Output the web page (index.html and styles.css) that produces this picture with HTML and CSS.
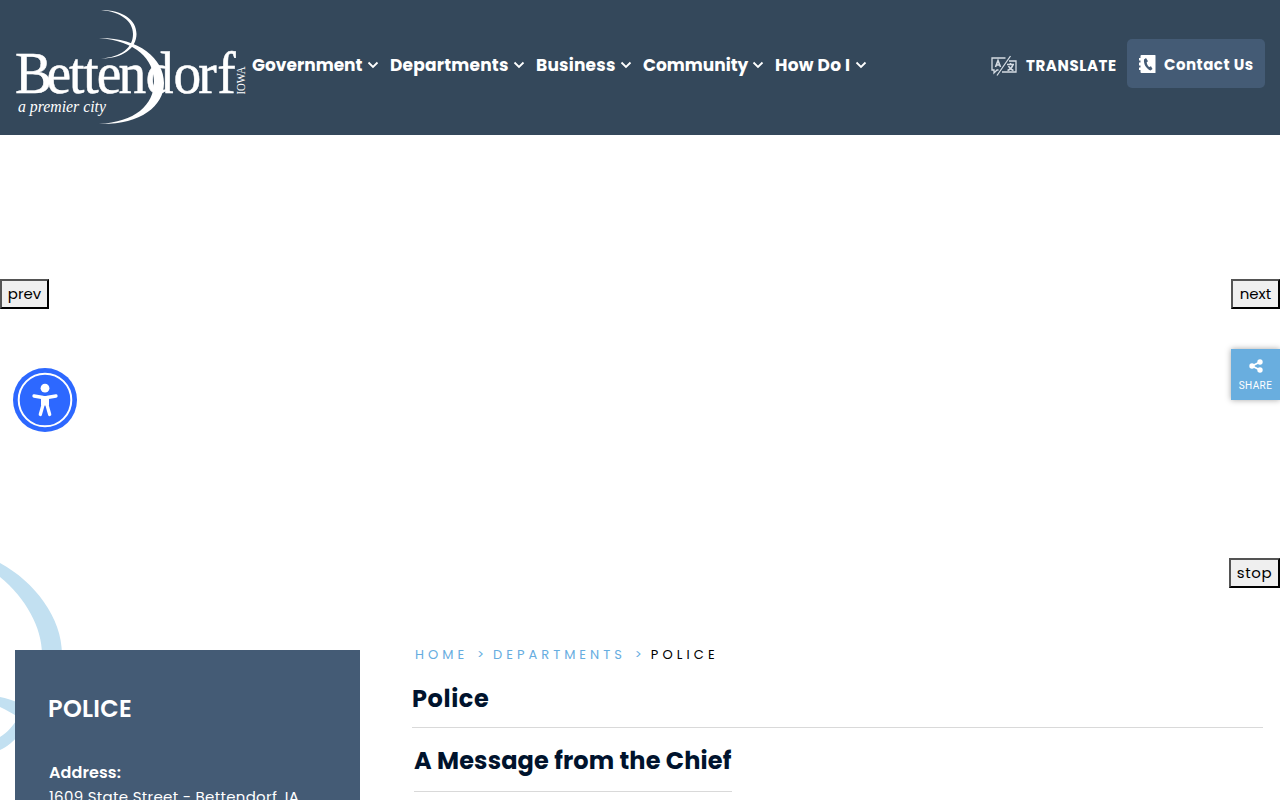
FILE: index.html
```html
<!DOCTYPE html>
<html lang="en">
<head>
    <meta charset="UTF-8">
    <meta name="viewport" content="width=device-width, initial-scale=1.0">
    <title>Police | Bettendorf, IA</title>
    <link rel="stylesheet" href="styles.css">
</head>
<body>
    <header class="header">
        <a class="logo" href="#">
            <svg width="252" height="135" viewBox="0 0 252 135" fill="#fff">
                <path d="M101 10C123 10 136.500 20 136.500 34C136.500 48 123 58.500 101 58.500C121 57 133 48 133 34C133 21 121 12 101 10Z"/>
                <path d="M99 38C138 37.500 164 58 164 83C164 107 139 125 99 124C135 122 154 105 154 82C154 59 136 41 99 38Z"/>
                <text class="logo-name" transform="scale(0.94 1)" x="16 49.500 73.500 88.500 103 126 155 184.500 211 231" y="93">Bettendorf</text>
                <text class="logo-tag" x="18" y="112" textLength="88" lengthAdjust="spacingAndGlyphs">a premier city</text>
                <text class="logo-state" transform="translate(245 94.500) rotate(-90)" textLength="28" lengthAdjust="spacingAndGlyphs">IOWA</text>
            </svg>
        </a>
        <nav class="nav">
            <a class="nav-item government" href="#"><span>Government</span><svg class="chevron" viewBox="0 0 12 8"><path d="M1.500 1.500L6 6L10.500 1.500"/></svg></a>
            <a class="nav-item departments" href="#"><span>Departments</span><svg class="chevron" viewBox="0 0 12 8"><path d="M1.500 1.500L6 6L10.500 1.500"/></svg></a>
            <a class="nav-item business" href="#"><span>Business</span><svg class="chevron" viewBox="0 0 12 8"><path d="M1.500 1.500L6 6L10.500 1.500"/></svg></a>
            <a class="nav-item community" href="#"><span>Community</span><svg class="chevron" viewBox="0 0 12 8"><path d="M1.500 1.500L6 6L10.500 1.500"/></svg></a>
            <a class="nav-item how" href="#"><span>How Do I</span><svg class="chevron" viewBox="0 0 12 8"><path d="M1.500 1.500L6 6L10.500 1.500"/></svg></a>
        </nav>
        <div class="tools">
            <a class="translate" href="#">
                <svg width="26" height="22" viewBox="0 0 26 22" fill="none" stroke="#d5dce3" stroke-width="1.300">
                    <path d="M14.500 3H1V15H3V18L6 15H7.500M19.500 1L6 20.500M18 6H25V17H11"/>
                    <path stroke-width="1.600" d="M4.500 12L7 5.500L9.500 12M5 10H9M16 9.500H23M19.500 8V9.500M22 9.500C21 13 19 14.500 16.500 15.500M17.500 11C19 14 20.500 15 22.500 15.500"/>
                </svg>
                <span>TRANSLATE</span>
            </a>
            <a class="contact" href="#">
                <svg width="17" height="18" viewBox="0 0 17 18">
                    <path fill="#fff" d="M2.500 0H16Q16.500 0 16.500 .5V17.500Q16.500 18 16 18H2.500Q1.500 18 1.500 17V15H0V12.500H1.500V10.500H0V7.500H1.500V5.500H0V3H1.500V1Q1.500 0 2.500 0Z"/>
                    <path fill="#445b75" d="M7 3L5 4.500C4.500 9 7 13.500 11.500 15.500L13.500 14L12 11.200L10.300 12C8.800 11 7.900 9.300 7.700 7.200L9 6.200Z"/>
                </svg>
                <span>Contact Us</span>
            </a>
        </div>
    </header>

    <section class="banner">
        <button class="slide-btn prev">prev</button>
        <button class="slide-btn next">next</button>
        <button class="slide-btn stop">stop</button>
    </section>

    <svg class="swirl" width="70" height="200" viewBox="0 0 70 200" fill="#c2e0f1">
        <path d="M0 13C35 32 62 68 62 104V120H42V104C42 78 26 48 0 27Z"/>
        <path d="M0 147C6 148 13 150 20 154V168C13 164 7 160 0 157Z"/>
        <path d="M20 165V184C14 191 7 197 0 200V187C7 183 14 175 20 165Z"/>
    </svg>

    <main class="content">
        <aside class="sidebar">
            <h2>POLICE</h2>
            <strong>Address:</strong>
            <p>1609 State Street - Bettendorf, IA</p>
        </aside>
        <article class="page">
            <div class="breadcrumb">
                <a class="crumb-home" href="#">HOME</a>
                <i>&gt;</i>
                <a class="crumb-dept" href="#">DEPARTMENTS</a>
                <i>&gt;</i>
                <span>POLICE</span>
            </div>
            <h1>Police</h1>
            <h2 class="message">A Message from the Chief</h2>
        </article>
    </main>

    <button class="accessibility" aria-label="Accessibility">
        <svg width="64" height="64" viewBox="0 0 64 64">
            <circle cx="32" cy="32" r="32" fill="#2d68ff"/>
            <circle cx="32" cy="32" r="26.300" fill="none" stroke="#fff" stroke-width="2"/>
            <circle cx="32" cy="20.200" r="4.400" fill="#fff"/>
            <path d="M21 28L30 29.500V37L27.300 46.500M43 28L34 29.500V37L36.700 46.500" fill="none" stroke="#fff" stroke-width="3.300" stroke-linecap="round" stroke-linejoin="round"/>
            <path d="M28 28H36V37.500H28Z" fill="#fff"/>
        </svg>
    </button>

    <a class="share" href="#">
        <svg width="14" height="14" viewBox="0 0 14 14" fill="#fff">
            <path d="M11 3L3 7L11 11" fill="none" stroke="#fff" stroke-width="1.800"/>
            <circle cx="11" cy="3" r="2.700"/><circle cx="3" cy="7" r="2.700"/><circle cx="11" cy="11" r="2.700"/>
        </svg>
        <span>SHARE</span>
    </a>
</body>
</html>
```
FILE: styles.css
```css
* {
    box-sizing: border-box;
}

body {
    margin: 0;
    height: 800px;
    overflow: hidden;
    position: relative;
    background: #fff;
    color: #000;
    font-family: Poppins, Inter, sans-serif;
}

a {
    color: inherit;
    text-decoration: none;
}

.header {
    display: flex;
    height: 135px;
    background: #34485b;
    color: #fff;
}

.logo svg {
    display: block;
}

.logo-name {
    font: 59px "Liberation Serif", serif;
    stroke: #fff;
    stroke-width: 0.5px;
}

.logo-tag {
    font: italic 17px "Liberation Serif", serif;
}

.logo-state {
    font: 13px "Liberation Serif", serif;
}

.nav {
    display: flex;
    gap: 11px;
    padding-top: 52px;
}

.nav-item {
    display: flex;
    justify-content: space-between;
    height: 26px;
    line-height: 26px;
    font-size: 17px;
    font-weight: 700;
    white-space: nowrap;
}

.government { width: 127px; }
.departments { width: 135px; letter-spacing: 0.2px; }
.business { width: 96px; letter-spacing: 0.2px; }
.community { width: 121px; }
.how { width: 92px; letter-spacing: 0.25px; }

.chevron {
    flex: none;
    width: 12px;
    height: 8px;
    margin-top: 9px;
    fill: none;
    stroke: #fff;
    stroke-width: 1.8;
}

.tools {
    display: flex;
    align-items: flex-start;
    margin-left: auto;
    padding: 39px 15px 0 0;
}

.translate {
    display: flex;
    align-items: center;
    gap: 9px;
    width: 136px;
    height: 53px;
    font-size: 15px;
    font-weight: 700;
    letter-spacing: 0.6px;
}

.contact {
    display: flex;
    align-items: center;
    gap: 8px;
    width: 138px;
    height: 49px;
    padding: 1px 0 0 12px;
    border-radius: 5px;
    background: #445b75;
    font-size: 15px;
    font-weight: 700;
    letter-spacing: 0.5px;
    white-space: nowrap;
}

.banner {
    position: relative;
    height: 465px;
}

.slide-btn {
    position: absolute;
    height: 30px;
    padding: 0 0 2px;
    border: 2px outset #000;
    background: #efefef;
    color: #000;
    font: 15px Poppins, Inter, sans-serif;
}

.prev {
    left: 0;
    top: 144px;
    width: 49px;
}

.next {
    right: 0;
    top: 144px;
    width: 49px;
}

.stop {
    right: 0;
    top: 423px;
    width: 51px;
    letter-spacing: 0.6px;
}

.swirl {
    position: absolute;
    left: 0;
    top: 550px;
}

.content {
    position: relative;
    display: flex;
    gap: 52px;
    height: 200px;
    overflow: hidden;
    padding: 40px 17px 0 15px;
}

.sidebar {
    flex: none;
    width: 345px;
    height: 150px;
    margin-top: 10px;
    padding: 40px 33px 0;
    background: #445b75;
    color: #fff;
}

.sidebar h2 {
    margin: 0 0 32px;
    font-size: 24px;
    font-weight: 600;
    line-height: 38px;
    letter-spacing: 0.3px;
}

.sidebar strong {
    display: block;
    padding-left: 1px;
    font-size: 16px;
    font-weight: 600;
    line-height: 25px;
    letter-spacing: 0.1px;
}

.sidebar p {
    margin: 0;
    padding-left: 1px;
    font-size: 15px;
    line-height: 24px;
    letter-spacing: 0.3px;
    white-space: nowrap;
}

.page {
    flex: 1;
}

.breadcrumb {
    display: flex;
    height: 30px;
    padding-left: 3px;
    color: #66addf;
    font-size: 13px;
    line-height: 30px;
    letter-spacing: 4px;
}

.breadcrumb i {
    width: 16px;
    font-style: normal;
}

.crumb-home,
.crumb-dept {
    margin-right: 9px;
}

.breadcrumb span {
    color: #000;
    letter-spacing: 4.1px;
}

.page h1 {
    height: 58px;
    margin: 0;
    border-bottom: 1px solid #d9d9d9;
    color: #00132d;
    font-size: 24px;
    font-weight: 700;
    line-height: 58px;
    letter-spacing: 0.6px;
}

.message {
    width: 318px;
    height: 64px;
    margin: 0 0 0 2px;
    border-bottom: 1px solid #d9d9d9;
    color: #00132d;
    font-size: 24px;
    font-weight: 700;
    line-height: 66px;
    letter-spacing: 0.13px;
    white-space: nowrap;
}

.accessibility {
    position: absolute;
    left: 13px;
    top: 368px;
    width: 64px;
    height: 64px;
    padding: 0;
    border: 0;
    background: none;
}

.share {
    position: absolute;
    right: 0;
    top: 349px;
    display: flex;
    flex-direction: column;
    align-items: center;
    gap: 6px;
    width: 49px;
    height: 51px;
    padding-top: 10px;
    background: #69aedf;
    box-shadow: 0 0 6px rgba(0, 0, 0, 0.35);
    color: #fff;
    font: 10px/14px Roboto, sans-serif;
    letter-spacing: 0.4px;
}
```
